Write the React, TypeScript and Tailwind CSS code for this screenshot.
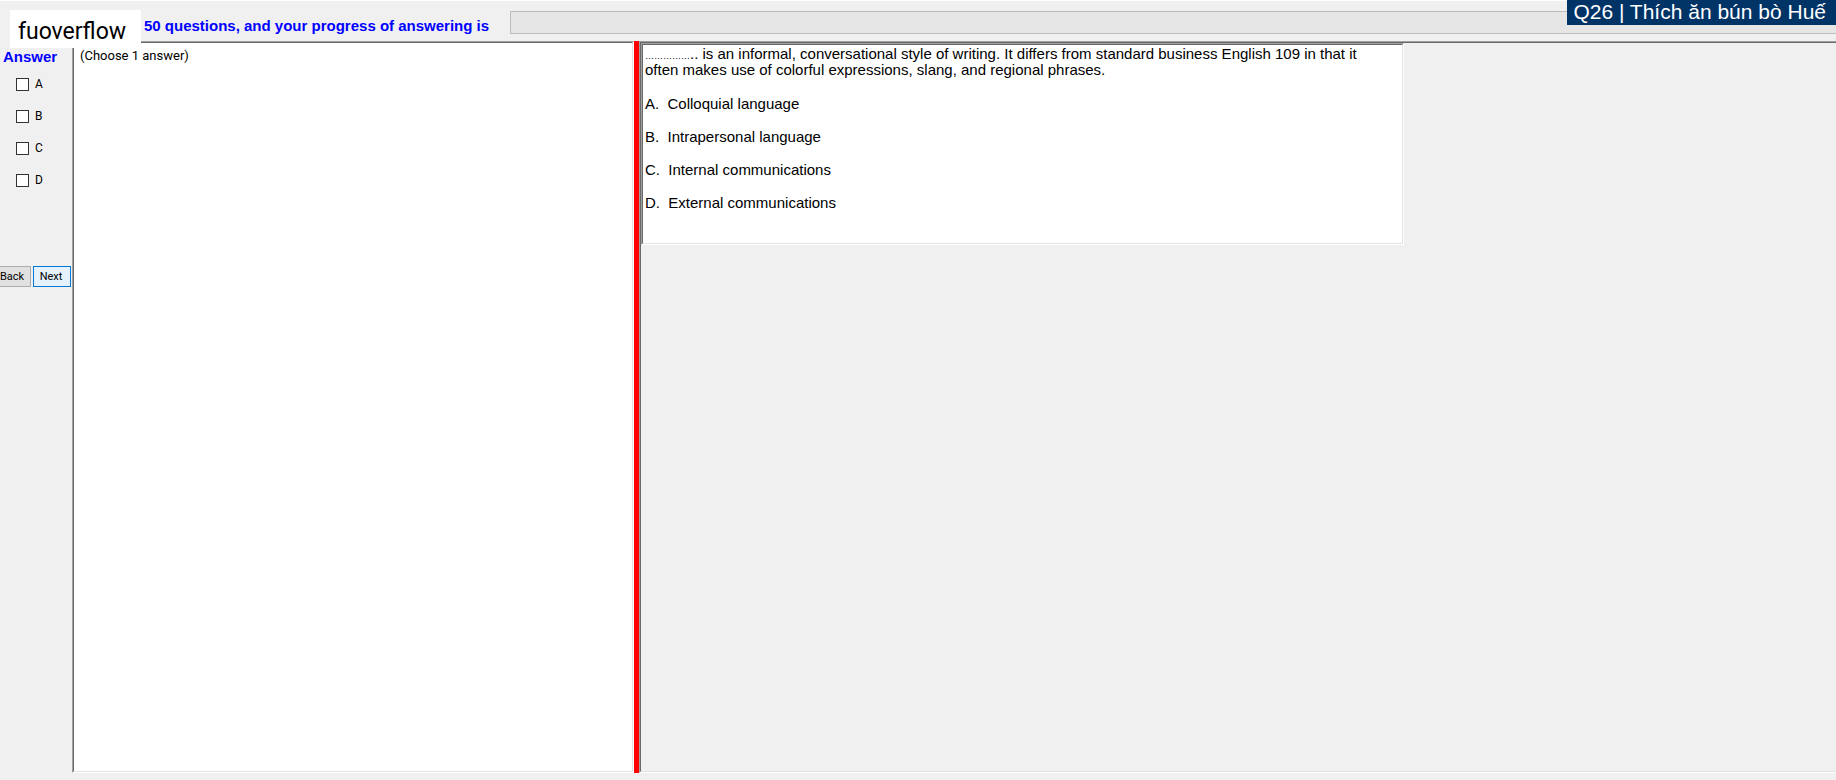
import React from "react";

const choices = ["A", "B", "C", "D"];

const options = [
  "A.  Colloquial language",
  "B.  Intrapersonal language",
  "C.  Internal communications",
  "D.  External communications",
];

function Header() {
  return (
    <header className="relative flex h-[41px] shrink-0 border-t border-white pl-36">
      <p className="mt-[15px] w-[366px] shrink-0 whitespace-nowrap font-['Liberation_Sans',sans-serif] text-[15px] leading-5 font-bold text-[#0000ff]">
        50 questions, and your progress of answering is
      </p>
      <div
        role="progressbar"
        aria-label="Progress of answering"
        aria-valuenow={0}
        className="mt-2.5 h-[23px] flex-1 border border-r-0 border-[#bcbcbc] bg-[#e6e6e6]"
      />
      {/* labels floating over the window */}
      <div className="absolute top-[9px] left-2.5 z-10 flex h-[38px] w-[131px] items-end bg-white pl-2 font-[Roboto,sans-serif] text-[23px] leading-8 text-black">
        fuoverflow
      </div>
      <div className="absolute -top-px right-0 h-[25px] bg-[#003366] pr-2.5 pl-1.5 font-['Liberation_Sans',sans-serif] text-[21px] leading-6 whitespace-nowrap text-white">
        Q26 | Thích ăn bún bò Huế
      </div>
    </header>
  );
}

function AnswerPanel() {
  return (
    <aside className="flex w-18 shrink-0 flex-col font-[Roboto,sans-serif] text-xs text-black">
      <h2 className="mt-1.5 pl-[3px] font-['Liberation_Sans',sans-serif] text-[15px] leading-5 font-bold text-[#0000ff]">
        Answer
      </h2>
      <div className="mt-[9px] flex flex-col gap-4 pl-4">
        {choices.map((choice) => (
          <label key={choice} className="flex h-4 items-center gap-1.5">
            <input
              type="checkbox"
              className="size-[13px] appearance-none border border-[#333333] bg-white checked:bg-[#333333]"
            />
            {choice}
          </label>
        ))}
      </div>
      <div className="mt-[78px] flex gap-0.5 text-[11px]">
        <button className="h-[21px] w-[31px] border border-l-0 border-[#adadad] bg-[#e1e1e1] pt-0.5 text-left">
          Back
        </button>
        <button className="h-[21px] w-[38px] border border-[#0078d7] bg-[#e5f1fb] pt-0.5 pr-0.5">
          Next
        </button>
      </div>
    </aside>
  );
}

export default function App() {
  return (
    <div className="flex h-screen flex-col overflow-hidden bg-[#f0f0f0] pb-[7px]">
      <Header />
      <main className="flex min-h-0 flex-1">
        <AnswerPanel />
        <section className="flex w-[562px] shrink-0 border-t border-r border-b border-l border-t-[#a0a0a0] border-r-white border-b-white border-l-[#a0a0a0]">
          <div className="flex-1 border border-t-[#696969] border-r-[#e3e3e3] border-b-[#e3e3e3] border-l-[#696969] bg-white px-1.5 pt-[3px] font-[Roboto,sans-serif] text-[13px] leading-5 text-black">
            (Choose 1 answer)
          </div>
        </section>
        <div className="w-[5px] shrink-0 bg-[#ff0000]" />
        <section className="flex flex-1 border-t border-b border-l border-t-[#a0a0a0] border-b-white border-l-[#a0a0a0]">
          <div className="flex-1 border-t border-b border-l border-t-[#696969] border-b-[#e3e3e3] border-l-[#696969]">
            <div className="w-[763px] max-w-full border border-t-[#a0a0a0] border-r-white border-b-white border-l-[#a0a0a0]">
              <div className="h-[200px] border border-t-[#696969] border-r-[#e3e3e3] border-b-[#e3e3e3] border-l-[#696969] bg-white pl-0.5 font-['Liberation_Sans',sans-serif] text-[15px] leading-4 text-black">
                <p className="w-[720px] pt-px">
                  <span className="inline-block text-[9px] leading-none">……………</span>.. is an informal, conversational style of writing. It differs from standard business English 109 in that it often makes use of colorful expressions, slang, and regional phrases.
                </p>
                <ul className="mt-[18px] flex flex-col gap-[17px] whitespace-pre">
                  {options.map((option) => (
                    <li key={option}>{option}</li>
                  ))}
                </ul>
              </div>
            </div>
          </div>
        </section>
      </main>
    </div>
  );
}
